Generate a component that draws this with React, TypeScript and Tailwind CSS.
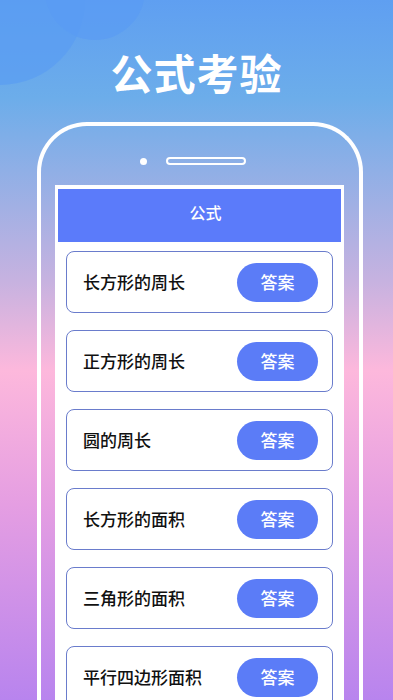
import React from "react";

const items = ["长方形的周长", "正方形的周长", "圆的周长", "长方形的面积", "三角形的面积", "平行四边形面积"];

const font = { fontFamily: '"Noto Sans CJK SC", "Noto Sans", sans-serif' };

export default function App() {
  return (
    <div
      className="relative h-[700px] w-[393px] overflow-hidden bg-[linear-gradient(180deg,#5f9ff1_0%,#6cadea_14%,#c6b2e0_40%,#fdb8dc_53%,#e59ee2_72%,#b884ee_100%)]"
      style={font}
    >
      <div className="absolute left-[-85px] top-[-85px] h-[170px] w-[170px] rounded-full bg-[#5a9cf2]/70" />
      <div className="absolute left-[45px] top-[-60px] h-[100px] w-[100px] rounded-full bg-[#5a9bf3]/70" />
      <div className="relative flex flex-col">
        <h1 className="pt-[50px] text-center text-[42px] font-bold leading-[44px] tracking-[1px] text-white">公式考验</h1>
        <div className="ml-[37px] mr-[30px] mt-[28px] flex h-[600px] flex-col rounded-t-[50px] border-[4px] border-b-0 border-white">
          <div className="flex items-center pl-[99px] pt-[31px]">
            <div className="h-[7px] w-[7px] rounded-full bg-white" />
            <div className="ml-[19px] h-[8px] w-[80px] rounded-full border-2 border-white" />
          </div>
          <div className="ml-[14px] mr-[15px] mt-[20px] flex flex-1 flex-col bg-white px-[3px] pt-[4px]">
            <div className="flex h-[53px] items-center justify-center bg-[#5b7bfa] pb-[8px] pl-[12px] text-[16px] font-medium text-white">公式</div>
            <div className="flex flex-col gap-[17px] px-[8px] pt-[9px]">
              {items.map((t) => (
                <div
                  key={t}
                  className="flex h-[62px] items-center justify-between rounded-[8px] border-[1.5px] border-[#6a7ccc] pl-[16px] pr-[14px]"
                >
                  <span className="text-[17px] font-medium text-[#111]">{t}</span>
                  <div className="flex h-[39px] w-[81px] items-center justify-center rounded-[20px] bg-[#5b7cf7] text-[17px] font-medium text-white">
                    答案
                  </div>
                </div>
              ))}
            </div>
          </div>
        </div>
      </div>
    </div>
  );
}
